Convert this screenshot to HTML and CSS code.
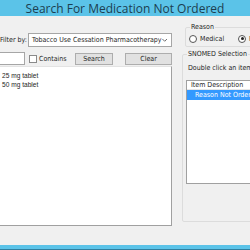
FILE: index.html
```html
<!DOCTYPE html>
<html lang="en">
<head>
    <meta charset="UTF-8">
    <title>Search For Medication Not Ordered</title>
    <link rel="stylesheet" href="styles.css">
</head>
<body>
    <div class="window">
        <div class="titlebar">Search For Medication Not Ordered</div>

        <div class="client">
            <!-- Left side: filter, search and results -->
            <div class="left-col">
                <div class="filter-row">
                    <span class="label">Filter by:</span>
                    <div class="combo">
                        <span>Tobacco Use Cessation Pharmacotherapy</span>
                        <svg class="chevron" width="7" height="5" viewBox="0 0 7 5"><path d="M0.5 0.5 L3.5 3.5 L6.5 0.5" fill="none" stroke="#444" stroke-width="1"/></svg>
                    </div>
                </div>
                <div class="search-row">
                    <div class="textbox"></div>
                    <span class="checkbox"></span>
                    <span class="label">Contains</span>
                    <button class="btn btn-search">Search</button>
                    <button class="btn btn-clear">Clear</button>
                </div>
                <div class="results">
                    <div class="result-item">25 mg tablet</div>
                    <div class="result-item">50 mg tablet</div>
                </div>
            </div>

            <!-- Right side: reason and SNOMED selection -->
            <div class="right-col">
                <fieldset class="group reason-group">
                    <legend>Reason</legend>
                    <label class="radio"><span class="radio-dot"></span>Medical</label>
                    <label class="radio"><span class="radio-dot checked"></span>Patient</label>
                </fieldset>
                <fieldset class="group snomed-group">
                    <legend>SNOMED Selection</legend>
                    <div class="hint">Double click an item</div>
                    <div class="listview">
                        <div class="lv-header">Item Description</div>
                        <div class="lv-row selected">Reason Not Ordered</div>
                    </div>
                </fieldset>
            </div>
        </div>

        <div class="frame-bottom"></div>
    </div>
</body>
</html>
```

FILE: styles.css
```css
* {
    box-sizing: border-box;
    margin: 0;
    padding: 0;
}

body {
    background-color: #f0f0f0;
    font-family: "DejaVu Sans Condensed", "Liberation Sans", sans-serif;
    font-size: 7px;
    color: #1e1e1e;
}

.window {
    width: 250px;
    height: 250px;
    overflow: hidden;
}

/* Title bar */
.titlebar {
    height: 16px;
    background-color: #5bc3e8;
    color: #1c3e50;
    font-family: "Open Sans", "Noto Sans", sans-serif;
    font-size: 12px;
    line-height: 17px;
    text-align: center;
    white-space: nowrap;
}

.client {
    display: flex;
    height: 229px;
    background-color: #f0f0f0;
}

/* Left column */
.left-col {
    width: 172px;
    flex-shrink: 0;
    padding-top: 17px;
    display: flex;
    flex-direction: column;
}

.filter-row {
    display: flex;
    align-items: center;
    height: 14px;
}

.filter-row .label {
    width: 28px;
    white-space: nowrap;
}

.combo {
    flex: 1;
    height: 14px;
    background-color: #fff;
    border: 1px solid #a6a6a6;
    display: flex;
    align-items: center;
    justify-content: space-between;
    padding: 0 4px 0 3px;
    white-space: nowrap;
    overflow: hidden;
}

.search-row {
    display: flex;
    align-items: center;
    height: 13px;
    margin-top: 5px;
}

.textbox {
    width: 25px;
    height: 13px;
    background-color: #fff;
    border: 1px solid #a6a6a6;
    border-left: none;
}

.checkbox {
    width: 8px;
    height: 8px;
    border: 1px solid #8a8a8a;
    background-color: #fff;
    margin-left: 4px;
}

.search-row .label {
    margin-left: 2px;
    width: 36px;
    white-space: nowrap;
}

.btn {
    height: 12px;
    font-family: inherit;
    font-size: 7px;
    color: #1e1e1e;
    background-color: #e1e1e1;
    border: 1px solid #adadad;
    line-height: 10px;
}

.btn-search {
    width: 38px;
}

.btn-clear {
    width: 47px;
    margin-left: 12px;
}

.results {
    margin-top: 1px;
    height: 160px;
    background-color: #fff;
    border: 1px solid #e3e3e3;
    border-left: none;
    border-right-color: #a0a0a0;
    border-bottom-color: #a0a0a0;
    padding: 4px 0 0 2px;
}

.result-item {
    font-family: "Liberation Sans", Arial, sans-serif;
    font-size: 6.6px;
    line-height: 9px;
}

/* Right column */
.right-col {
    margin-left: 10px;
    width: 100px;
    flex-shrink: 0;
    padding-top: 7px;
}

.group {
    border: 1px solid #dcdcdc;
    border-radius: 2px;
    padding: 0 3px;
}

.group legend {
    padding: 0 1px;
    margin-left: 1px;
    white-space: nowrap;
}

.reason-group {
    height: 24px;
    margin-left: 3px;
    padding-left: 3px;
    display: flex;
    align-items: center;
}

.radio {
    display: flex;
    align-items: center;
    width: 49px;
    white-space: nowrap;
}

.radio-dot {
    width: 8px;
    height: 8px;
    border-radius: 50%;
    border: 1px solid #555;
    background-color: #fff;
    margin-right: 3px;
    position: relative;
}

.radio-dot.checked::after {
    content: "";
    position: absolute;
    left: 1.5px;
    top: 1.5px;
    width: 3px;
    height: 3px;
    border-radius: 50%;
    background-color: #222;
}

.snomed-group {
    margin-top: 3px;
    height: 172px;
}

.hint {
    margin: 6px 0 0 2px;
    white-space: nowrap;
}

.listview {
    margin-top: 8px;
    height: 104px;
    background-color: #fff;
    border: 1px solid #a0a0a0;
}

.lv-header {
    height: 9px;
    line-height: 8px;
    padding-left: 4px;
    border-bottom: 1px solid #e5e5e5;
    white-space: nowrap;
}

.lv-row {
    height: 10px;
    line-height: 10px;
    padding-left: 8px;
    white-space: nowrap;
}

.lv-row.selected {
    background-color: #3399ff;
    color: #fff;
}

.frame-bottom {
    height: 5px;
    background-color: #5bc3e8;
    border-bottom: 1px solid #2f7fa0;
}
```
